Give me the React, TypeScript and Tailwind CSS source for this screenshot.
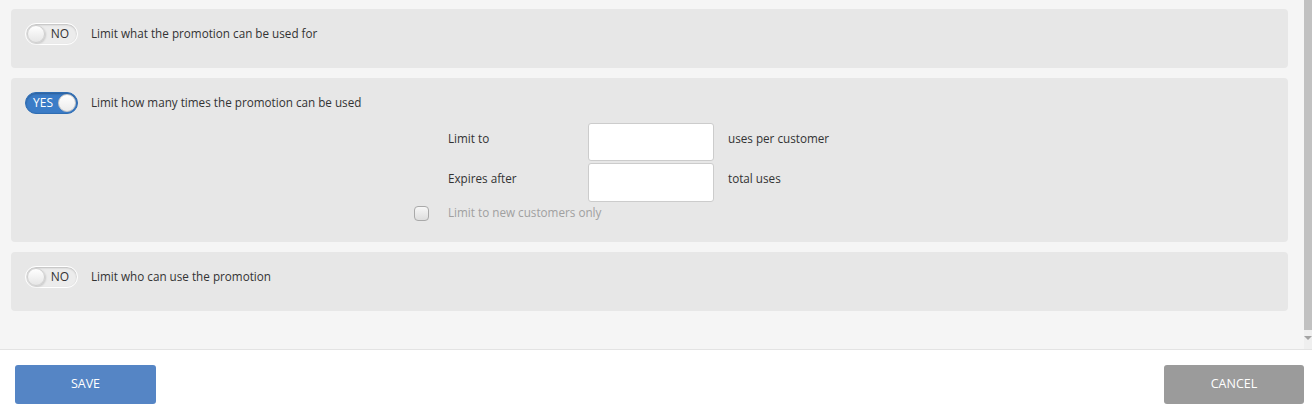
import React from "react";

function Toggle({ on }: { on: boolean }) {
  if (on) {
    return (
      <div className="relative flex h-[22px] w-[53px] shrink-0 items-center rounded-full border border-[#2f6db3] bg-[#3b7cc7] pl-[7px] shadow-[inset_0_1px_2px_rgba(0,0,0,0.25)]">
        <span className="text-[12px] leading-none text-white">YES</span>
        <span className="absolute right-[1px] top-[1px] h-[18px] w-[18px] rounded-full border border-[#c8c8c8] bg-gradient-to-b from-white to-[#ececec]" />
      </div>
    );
  }
  return (
    <div className="relative flex h-[22px] w-[53px] shrink-0 items-center justify-end rounded-full border border-white bg-[#ececec] pr-[8px] shadow-[inset_0_1px_2px_rgba(0,0,0,0.2)]">
      <span className="text-[12px] leading-none text-[#333]">NO</span>
      <span className="absolute left-[1px] top-[1px] h-[18px] w-[18px] rounded-full border border-[#cfcfcf] bg-gradient-to-b from-white to-[#e6e6e6] shadow-[1px_1px_2px_rgba(0,0,0,0.15)]" />
    </div>
  );
}

function Card({ on, label, tall, children }: { on: boolean; label: string; tall?: boolean; children?: React.ReactNode }) {
  return (
    <div className={tall ? "h-[164px] rounded-[4px] bg-[#e7e7e7] px-[14px] pt-[14px]" : "h-[59px] rounded-[4px] bg-[#e7e7e7] px-[14px] pt-[14px]"}>
      <div className="flex h-[22px] items-center gap-[13px]">
        <Toggle on={on} />
        <span className="text-[11.7px] text-[#333]">{label}</span>
      </div>
      {children}
    </div>
  );
}

export default function App() {
  return (
    <div className="flex h-[416px] w-[1312px] flex-col overflow-hidden bg-white text-[#333]" style={{ fontFamily: "'Open Sans', sans-serif" }}>
      <div className="flex h-[350px] border-b border-[#e3e3e3] bg-[#f5f5f5]">
        <div className="flex flex-1 flex-col gap-[10px] pl-[11px] pr-[16px] pt-[9px]">
          <Card on={false} label="Limit what the promotion can be used for" />
          <Card on={true} tall label="Limit how many times the promotion can be used">
            <div className="ml-[389px] mt-[9px] flex flex-col gap-[2px]">
              <div className="flex items-start">
                <span className="w-[34px]" />
                <span className="w-[140px] pt-[6px] text-[11.7px] leading-[18px]">Limit to</span>
                <div className="h-[38px] w-[126px] rounded-[3px] border border-[#cccccc] bg-white" />
                <span className="ml-[14px] pt-[6px] text-[11.7px] leading-[18px]">uses per customer</span>
              </div>
              <div className="flex items-start">
                <span className="w-[34px]" />
                <span className="w-[140px] pt-[6px] text-[11.7px] leading-[18px]">Expires after</span>
                <div className="h-[39px] w-[126px] rounded-[3px] border border-[#cccccc] bg-white" />
                <span className="ml-[14px] pt-[6px] text-[11.7px] leading-[18px]">total uses</span>
              </div>
              <div className="flex h-[18px] items-center">
                <span className="w-[34px]">
                  <span className="block h-[15px] w-[15px] rounded-[4px] border border-[#a9a9a9] bg-gradient-to-b from-[#f7f7f7] to-[#dedede]" />
                </span>
                <span className="text-[11.7px] text-[#a0a0a0]">Limit to new customers only</span>
              </div>
            </div>
          </Card>
          <Card on={false} label="Limit who can use the promotion" />
        </div>
        <div className="flex w-[8px] flex-col bg-[#efefef]">
          <div className="h-[330px] bg-[#c1c1c1]" />
          <div className="flex flex-1 justify-center pt-[6px]">
            <span className="h-0 w-0 border-x-[4px] border-t-[4px] border-x-transparent border-t-[#a3a3a3]" />
          </div>
        </div>
      </div>
      <div className="flex items-start justify-between px-[15px] pt-[15px]">
        <button className="h-[39px] w-[141px] rounded-[3px] bg-[#5585c5] text-[12.5px] text-white">SAVE</button>
        <button className="mr-[-7px] h-[39px] w-[140px] rounded-[3px] bg-[#9b9b9b] text-[12.5px] text-white">CANCEL</button>
      </div>
    </div>
  );
}
